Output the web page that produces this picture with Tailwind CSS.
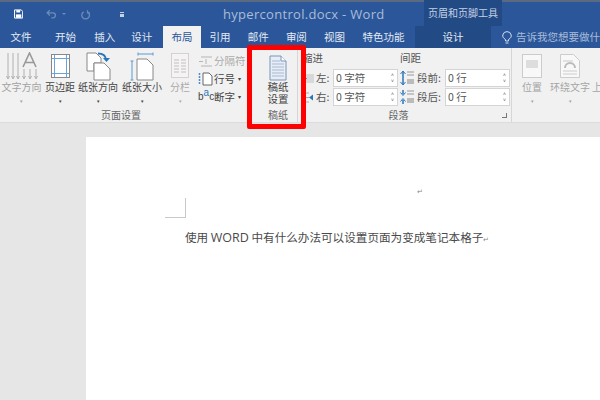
<!DOCTYPE html>
<html><head><meta charset="utf-8"><script src="https://cdn.jsdelivr.net/npm/@tailwindcss/browser@4"></script></head>
<body class="m-0">
<div class="relative w-[600px] h-[400px] overflow-hidden bg-[#e6e6e6] text-[11px] leading-none text-[#555]" style="font-family:'Noto Sans CJK SC','Liberation Sans',sans-serif">
  <!-- title bar -->
  <div class="h-[26px] bg-[#2b579a] border-t-2 border-[#5a6a80] flex text-[#a9bcd8]">
    <div class="w-[124px] flex items-center shrink-0">
      <svg class="ml-[14px]" width="12" height="12" viewBox="0 0 12 12"><path d="M.7.700h8.800l1.800 1.800v8.800H.7z" fill="none" stroke="#fff" stroke-width="1.300"/><rect x="3" y="1" width="5" height="3" fill="#fff"/><rect x="2.500" y="6.500" width="7" height="4.500" fill="#fff"/></svg>
      <svg class="ml-[23px]" width="14" height="12" viewBox="0 0 14 12"><path d="M5 1 1.500 4.500 5 8M2 4.500h7a3.200 3.200 0 0 1 0 6.500H7" fill="none" stroke="#6d8bb9" stroke-width="1.700"/></svg>
      <span class="ml-[5px] w-0 h-0 border-x-[2px] border-t-[2px] border-x-transparent border-t-[#6d8bb9]"></span>
      <svg class="ml-[15px]" width="12" height="13" viewBox="0 0 12 13"><path d="M3.500 3a5 5 0 1 0 5 0M8.500 1v3.500H12" fill="none" stroke="#6d8bb9" stroke-width="1.700"/></svg>
      <span class="ml-[30px] w-[5px] h-[5px] border-t border-b-[3px] border-[#c5d2e6]"></span>
    </div>
    <div class="w-[300px] pl-[99px] flex items-center whitespace-nowrap text-[13px] tracking-[0.3px] shrink-0" style="font-family:'Open Sans','Liberation Sans',sans-serif">hypercontrol.docx - Word</div>
    <div class="w-[78px] mt-[-2px] h-[26px] bg-[#224a85] flex items-center justify-center text-[10px] text-[#c3d0e4] shrink-0">页眉和页脚工具</div>
  </div>
  <!-- tabs -->
  <div class="h-[22px] bg-[#2b579a] flex text-[#e4eaf3] text-[10.500px]">
    <span class="w-[43px] flex items-center justify-center">文件</span>
    <span class="w-[48px] flex items-center justify-center">开始</span>
    <span class="w-[32px] flex items-center justify-center">插入</span>
    <span class="w-[44px] flex items-center justify-center">设计</span>
    <span class="w-[38px] bg-[#f1f1f1] text-[#2b579a] flex items-center justify-center">布局</span>
    <span class="w-[40px] flex items-center justify-center">引用</span>
    <span class="w-[38px] flex items-center justify-center">邮件</span>
    <span class="w-[40px] flex items-center justify-center">审阅</span>
    <span class="w-[38px] flex items-center justify-center">视图</span>
    <span class="w-[62px] flex items-center justify-center">特色功能</span>
    <span class="w-[78px] ml-[1px] bg-[#224a85] flex items-center justify-center">设计</span>
    <span class="ml-[11px] flex items-center text-[#a9bcd8] whitespace-nowrap gap-[4px]">
      <svg width="10" height="13" viewBox="0 0 10 13"><path d="M3.500 10V8.500C1 7 0.500 5.500 0.800 4A4.300 4.300 0 0 1 9.200 4C9.500 5.500 9 7 6.500 8.500V10zM3.500 12h3" fill="none" stroke="#d3deee"/></svg>告诉我您想要做什</span>
  </div>
  <!-- ribbon -->
  <div class="h-[75px] bg-[#f1f1f1] flex border-b border-[#dcdcdc]">
    <!-- page setup -->
    <div class="w-[252px] flex flex-col shrink-0">
      <div class="h-[61px] flex text-[10px]">
        <div class="w-[43px] flex flex-col items-center text-[#a2a2a2] pt-[4px]">
          <svg width="32" height="29" viewBox="0 0 32 29"><path d="M2 1v25M7 1v25M12 1v25M18 17v9M24 17v9M30 17v9" stroke="#b0b0b0" fill="none"/><path d="M.5 24 2 27l1.500-3M5.500 24 7 27l1.500-3M10.500 24 12 27l1.500-3M16.500 24 18 27l1.500-3M22.500 24 24 27l1.500-3M28.500 24 30 27l1.500-3" stroke="#b0b0b0" fill="none"/><path d="m17 15 6.500-14L30 15M19 10.500h9" stroke="#999" stroke-width="1.600" fill="none"/></svg>
          <span class="mt-[1px] whitespace-nowrap">文字方向</span><span class="mt-[6px] text-[5px]">▾</span>
        </div>
        <div class="w-[34px] flex flex-col items-center pt-[6px] text-[#444]">
          <svg width="19" height="24" viewBox="0 0 19 24"><rect x=".5" y=".5" width="18" height="23" fill="#fff" stroke="#888"/><path d="M3.500 1v22M15.500 1v22M1 4.500h17M1 19.500h17" stroke="#6aa3d8"/></svg>
          <span class="mt-[4px] whitespace-nowrap">页边距</span><span class="mt-[6px] text-[5px]">▾</span>
        </div>
        <div class="w-[42px] flex flex-col items-center pt-[4px] text-[#444]">
          <svg width="25" height="29" viewBox="0 0 25 29"><path d="M1 1h9l5 5v5H8v8H1z" fill="#fff" stroke="#888"/><path d="M8 11h10l6 6v11H8z" fill="#fff" stroke="#888"/><path d="M12 1.500c5 0 7.500 1.500 8 6" fill="none" stroke="#2a75bb" stroke-width="2"/><path d="M17 6h7l-3.500 4z" fill="#2a75bb"/></svg>
          <span class="mt-[1px] whitespace-nowrap">纸张方向</span><span class="mt-[6px] text-[5px]">▾</span>
        </div>
        <div class="w-[46px] flex flex-col items-center pt-[4px] text-[#444]">
          <svg width="24" height="29" viewBox="0 0 24 29"><path d="M8 2h15M8 .5v3M23 .5v3M2 9v19M.5 9h3M.5 28h3" stroke="#5b9bd5" fill="none"/><path d="M7 7h10l6 6v15H7z" fill="#fff" stroke="#888"/></svg>
          <span class="mt-[1px] whitespace-nowrap">纸张大小</span><span class="mt-[6px] text-[5px]">▾</span>
        </div>
        <div class="w-[30px] flex flex-col items-center text-[#aaa] pt-[5px]">
          <svg width="18" height="25" viewBox="0 0 18 25"><rect x=".5" y=".5" width="17" height="24" fill="#f6f3f5" stroke="#d5d0d5"/><path d="M3 7h5M10 7h5M3 10h5M10 10h5M3 13h5M10 13h5M3 16h5M10 16h5M3 19h5M10 19h5" stroke="#c0c0c0"/></svg>
          <span class="mt-[4px] whitespace-nowrap">分栏</span><span class="mt-[6px] text-[5px]">▾</span>
        </div>
        <div class="flex flex-col gap-[4px] pt-[6px] pl-[3px] whitespace-nowrap text-[10.500px]">
          <span class="h-[14px] flex items-center gap-[2px] text-[#aaa]"><svg width="14" height="11" viewBox="0 0 14 11"><path d="M3 1h11M3 10h11M1 5.500h4M8 3v5" stroke="#b5b5b5" fill="none"/></svg>分隔符</span>
          <span class="h-[14px] flex items-center gap-[1px] text-[#444]"><svg width="15" height="14" viewBox="0 0 15 14"><path d="M5 1h6l3 3v9H5z" fill="#fff" stroke="#666"/><path d="M1.500 1v12" stroke="#4a90d0" stroke-dasharray="2 1" stroke-width="1.500"/></svg>行号<span class="text-[6px] ml-[2px]">▾</span></span>
          <span class="h-[14px] flex items-center gap-[1px] text-[#444]"><span class="text-[10px] leading-[10px] w-[15px] text-[#444]" style="font-family:'Liberation Sans'">b<span class="relative top-[-4px] text-[#2a75bb]">a</span>c</span>断字<span class="text-[6px] ml-[2px]">▾</span></span>
        </div>
      </div>
      <div class="text-center pr-[10px] pt-[1px] text-[10px] text-[#666]">页面设置</div>
    </div>
    <!-- gaozhi -->
    <div class="w-[46px] shrink-0 flex flex-col items-center pl-[7px] border-r border-[#d6d6d6]">
      <svg class="mt-[7px]" width="18" height="26" viewBox="0 0 18 26"><path d="M1 1h11l5 5v19H1z" fill="#e6edf7" stroke="#7a94b8"/><path d="M12 1v5h5" fill="#fff" stroke="#7a94b8"/><path d="M3 6h8M3 9h12M3 12h12M3 15h12M3 18h12M3 21h12" stroke="#a9b9d2"/></svg>
      <span class="mt-[0px] text-[10.500px] leading-[12px] text-center text-[#444] whitespace-nowrap">稿纸<br>设置</span>
      <span class="mt-[5px] text-[10px] text-[#666]">稿纸</span>
    </div>
    <!-- paragraph -->
    <div class="w-[214px] shrink-0 flex flex-col border-r border-[#d6d6d6] text-[#555]">
      <div class="h-[21px] flex items-center text-[10.500px]"><span class="ml-[4px] w-[98px]">缩进</span><span>间距</span></div>
      <div class="flex flex-col gap-[1px] text-[10.500px]">
        <div class="h-[18px] flex items-center">
          <svg class="ml-[4px]" width="12" height="11" viewBox="0 0 12 11"><rect x="1" y="1" width="11" height="9" fill="#d8d8d8"/><path d="M1 2.500l4 3-4 3z" fill="#2a75bb"/></svg>
          <span class="ml-[2px] w-[17px]">左:</span>
          <span class="w-[65px] h-[18px] bg-white border border-[#d4d4d4] flex items-center pl-[2px] justify-between pr-[3px]">0 字符<span class="flex flex-col text-[5px] leading-[6px]"><i class="not-italic">˄</i><i class="not-italic">˅</i></span></span>
          <svg class="ml-[2px]" width="14" height="16" viewBox="0 0 14 16"><path d="M3 2v12" stroke="#2a75bb" stroke-width="1.500"/><path d="M.5 4l2.500-3 2.500 3M.5 12l2.500 3 2.500-3" fill="none" stroke="#2a75bb"/><path d="M7 2h7M7 5h7" stroke="#999"/><rect x="7" y="9" width="7" height="5" fill="#bbb"/></svg>
          <span class="ml-[3px] w-[28px]">段前:</span>
          <span class="w-[65px] h-[18px] bg-white border border-[#d4d4d4] flex items-center pl-[2px] justify-between pr-[3px]">0 行<span class="flex flex-col text-[5px] leading-[6px]"><i class="not-italic">˄</i><i class="not-italic">˅</i></span></span>
        </div>
        <div class="h-[18px] flex items-center">
          <svg class="ml-[4px]" width="12" height="11" viewBox="0 0 12 11"><path d="M0 1h7M0 5.500h7M0 10h7" stroke="#aaa"/><path d="M11 2.500l-4 3 4 3z" fill="#2a75bb"/></svg>
          <span class="ml-[2px] w-[17px]">右:</span>
          <span class="w-[65px] h-[18px] bg-white border border-[#d4d4d4] flex items-center pl-[2px] justify-between pr-[3px]">0 字符<span class="flex flex-col text-[5px] leading-[6px]"><i class="not-italic">˄</i><i class="not-italic">˅</i></span></span>
          <svg class="ml-[2px]" width="14" height="16" viewBox="0 0 14 16"><path d="M3 5V1M3 11v4" stroke="#2a75bb" stroke-width="1.500"/><path d="M.5 3.500 3 6.500l2.500-3M.5 12.500 3 9.500l2.500 3" fill="none" stroke="#2a75bb"/><path d="M7 2h7M7 5h7" stroke="#999"/><rect x="7" y="9" width="7" height="5" fill="#bbb"/></svg>
          <span class="ml-[3px] w-[28px]">段后:</span>
          <span class="w-[65px] h-[18px] bg-white border border-[#d4d4d4] flex items-center pl-[2px] justify-between pr-[3px]">0 行<span class="flex flex-col text-[5px] leading-[6px]"><i class="not-italic">˄</i><i class="not-italic">˅</i></span></span>
        </div>
      </div>
      <div class="relative mt-[2px] pt-[2px] text-center text-[10px] text-[#666] pr-[12px]">段落<span class="absolute right-[4px] top-[5px] w-[5px] h-[5px] border-r border-b border-[#777]"></span></div>
    </div>
    <!-- arrange -->
    <div class="flex-1 flex text-[10px] text-[#a5a5a5] whitespace-nowrap">
      <div class="w-[40px] flex flex-col items-center pt-[6px] shrink-0">
        <svg width="20" height="24" viewBox="0 0 20 24"><rect x=".5" y=".5" width="19" height="23" fill="#f8f8f8" stroke="#ccc"/><rect x="4" y="6" width="12" height="8" fill="#ddd"/></svg>
        <span class="mt-[4px]">位置</span><span class="mt-[6px] text-[5px]">▾</span>
      </div>
      <div class="w-[40px] ml-[-2px] flex flex-col items-center pt-[6px] shrink-0">
        <svg width="20" height="24" viewBox="0 0 20 24"><path d="M.5.500h13l6 6v17H.500z" fill="#f8f8f8" stroke="#ccc"/><path d="M3 7h10M3 17h14M3 20h14" stroke="#ccc"/><path d="M5 14a5 5 0 0 1 10 0" fill="none" stroke="#bbb" stroke-width="2"/></svg>
        <span class="mt-[4px]">环绕文字</span><span class="mt-[6px] text-[5px]">▾</span>
      </div>
      <span class="ml-[2px] mt-[34px] shrink-0">上</span>
    </div>
  </div>
  <!-- document -->
  <div class="relative ml-[86px] mt-[14px] h-[263px] bg-white text-[#444]">
    <span class="absolute left-[331px] top-[51px] text-[7px] text-[#888]">↵</span>
    <div class="absolute left-[79px] top-[61px] w-[21px] h-[20px] border-r border-b border-[#c8c8c8]"></div>
    <p class="absolute left-[99px] top-[92px] whitespace-nowrap text-[11.600px] leading-[16px] text-[#4a4a4a]">使用 <span class="text-[12.500px]" style="font-family:'Open Sans'">WORD</span> 中有什么办法可以设置页面为变成笔记本格子<span class="text-[7px] text-[#888]">↵</span></p>
  </div>
  <!-- highlight -->
  <div class="absolute left-[247px] top-[45px] w-[59px] h-[84px] border-[5px] border-[#fe0000] rounded-[2px]"></div>
</div>
</body></html>
